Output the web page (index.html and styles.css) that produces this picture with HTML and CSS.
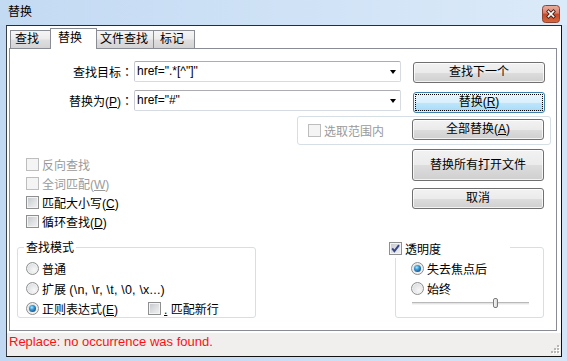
FILE: index.html
```html
<!DOCTYPE html>
<html>
<head>
<meta charset="utf-8">
<title>替换</title>
<link rel="stylesheet" href="styles.css">
</head>
<body>
<div class="window">
  <div class="titlebar">
    <span class="title">替换</span>
    <span class="close">
      <svg width="18" height="18" viewBox="0 0 18 18">
        <defs>
          <linearGradient id="cg" x1="0" y1="0" x2="0" y2="1">
            <stop offset="0" stop-color="#eab0a2"/>
            <stop offset="0.45" stop-color="#d9806b"/>
            <stop offset="0.5" stop-color="#c4462a"/>
            <stop offset="1" stop-color="#d96a3a"/>
          </linearGradient>
        </defs>
        <rect x="0.5" y="0.5" width="17" height="17" rx="3" fill="url(#cg)" stroke="#8a4536"/>
        <path d="M6.5 6.5 L11.5 11.5 M11.5 6.5 L6.5 11.5" stroke="#4a1e14" stroke-width="3.4" stroke-linecap="square"/>
        <path d="M6.5 6.5 L11.5 11.5 M11.5 6.5 L6.5 11.5" stroke="#ffffff" stroke-width="1.7" stroke-linecap="square"/>
      </svg>
    </span>
  </div>
  <div class="client">
    <div class="main">
      <div class="tabs">
        <div class="tab t1">查找</div>
        <div class="tab active">替换</div>
        <div class="tab t3">文件查找</div>
        <div class="tab t4">标记</div>
      </div>
      <div class="panel">
        <div class="row r1">
          <div class="lbl">查找目标<span class="colon">：</span></div>
          <div class="combo"><span class="val">href=".*[^"]"</span><span class="arrow"></span></div>
          <div class="btn">查找下一个</div>
        </div>
        <div class="row r2">
          <div class="lbl">替换为(<u>P</u>)<span class="colon">：</span></div>
          <div class="combo"><span class="val">href="#"</span><span class="arrow"></span></div>
          <div class="btn focus">替换(<u>R</u>)</div>
        </div>
        <div class="selgroup">
          <div class="chk sel disabled"><span class="box"></span><span>选取范围内</span></div>
          <div class="btn">全部替换(<u>A</u>)</div>
        </div>
        <div class="lower">
          <div class="checks">
            <div class="chk disabled"><span class="box"></span><span>反向查找</span></div>
            <div class="chk disabled"><span class="box"></span><span>全词匹配(<u>W</u>)</span></div>
            <div class="chk"><span class="box"></span><span>匹配大小写(<u>C</u>)</span></div>
            <div class="chk"><span class="box"></span><span>循环查找(<u>D</u>)</span></div>
          </div>
          <div class="btncol">
            <div class="btn tall">替换所有打开文件</div>
            <div class="btn">取消</div>
          </div>
        </div>
        <div class="bottom">
          <div class="group mode">
            <div class="legend">查找模式</div>
            <div class="opt"><span class="radio"></span><span>普通</span></div>
            <div class="opt"><span class="radio"></span><span>扩展 <span class="esc">(\n, \r, \t, \0, \x...)</span></span></div>
            <div class="opt">
              <div class="optitem"><span class="radio on"><span class="dot"></span></span><span>正则表达式(<u>E</u>)</span></div>
              <div class="chk"><span class="box"></span><span><u>.</u> 匹配新行</span></div>
            </div>
          </div>
          <div class="group trans">
            <div class="chk head"><span class="box">
              <svg width="11" height="11" viewBox="0 0 11 11"><path d="M2.2 5.4 L4.4 8.2 L9 2.2" fill="none" stroke="#34468a" stroke-width="1.9"/></svg>
            </span><span>透明度</span></div>
            <div class="opt"><span class="radio on"><span class="dot"></span></span><span>失去焦点后</span></div>
            <div class="opt"><span class="radio"></span><span>始终</span></div>
            <div class="slider"><span class="track a"></span><span class="thumb"></span><span class="track b"></span></div>
          </div>
        </div>
      </div>
    </div>
    <div class="status">
      <span class="msg">Replace: no occurrence was found.</span>
      <svg class="grip" width="10" height="10" viewBox="0 0 10 10">
        <g fill="#ffffff">
          <rect x="8" y="2" width="2" height="2"/><rect x="5" y="5" width="2" height="2"/><rect x="8" y="5" width="2" height="2"/>
          <rect x="2" y="8" width="2" height="2"/><rect x="5" y="8" width="2" height="2"/><rect x="8" y="8" width="2" height="2"/>
        </g>
        <g fill="#b8b6b2">
          <rect x="7" y="1" width="2" height="2"/><rect x="4" y="4" width="2" height="2"/><rect x="7" y="4" width="2" height="2"/>
          <rect x="1" y="7" width="2" height="2"/><rect x="4" y="7" width="2" height="2"/><rect x="7" y="7" width="2" height="2"/>
        </g>
      </svg>
    </div>
  </div>
</div>
</body>
</html>
```

FILE: styles.css
```css
* { box-sizing: border-box; }
html, body { margin: 0; padding: 0; }
body {
  width: 567px;
  height: 361px;
  overflow: hidden;
  font-family: "Liberation Sans", "Noto Sans CJK SC", sans-serif;
  font-size: 12px;
  color: #000;
}
u { text-decoration: underline; text-underline-offset: 1px; }

.window {
  width: 567px;
  height: 361px;
  display: flex;
  flex-direction: column;
  background: linear-gradient(90deg, #c0d8f1 0%, #c8ddf4 45%, #d4e5f7 100%);
}

.titlebar {
  height: 25px;
  display: flex;
  align-items: flex-start;
  padding-left: 8px;
  background: linear-gradient(90deg, #c3daf3 0%, #cfe2f6 50%, #dbeaf9 100%);
}
.title { line-height: 24px; font-size: 12px; }
.close { margin: 5px 7px 0 auto; width: 18px; height: 18px; display: flex; }

.client {
  margin: 0 5px 0 6px;
  height: 332px;
  border: 1px solid #111;
  border-left-color: #3a3f47;
  border-top-color: #2a2e34;
  display: flex;
  flex-direction: column;
}
.main { height: 307px; background: #fff; }

.tabs {
  height: 22px;
  display: flex;
  align-items: flex-end;
  padding-left: 3px;
}
.tab {
  height: 18px;
  border: 1px solid #898c95;
  border-bottom: none;
  background: linear-gradient(#f5f5f5 0%, #ececec 45%, #dedede 55%, #d3d3d3 100%);
  line-height: 16px;
  padding-left: 4px;
  margin-left: -1px;
  white-space: nowrap;
}
.tab.t1 { width: 41px; margin-left: 0; padding-left: 4px; }
.tab.active {
  width: 47px;
  height: 21px;
  margin-bottom: -1px;
  background: #fff;
  line-height: 18px;
  padding-left: 7px;
  position: relative;
  z-index: 1;
}
.tab.t3 { width: 58px; padding-left: 3px; }
.tab.t4 { width: 42px; padding-left: 6px; }

.panel {
  margin-left: 2px;
  width: 548px;
  height: 283px;
  border: 1px solid #898c95;
  background: #fff;
}

.row { display: flex; height: 21px; }
.r1 { margin-top: 12px; }
.r2 { margin-top: 8px; }
.lbl { width: 123px; text-align: right; line-height: 21px; white-space: nowrap; }
.colon { font-family: "Noto Sans CJK JP", sans-serif; }
.combo {
  margin-left: 1px;
  width: 267px;
  height: 21px;
  border: 1px solid #d6dbe2;
  border-top-color: #abadb3;
  border-left-color: #c8ccd2;
  border-radius: 2px;
  display: flex;
  align-items: center;
  padding-left: 2px;
}
.combo .val { flex: 1; line-height: 19px; white-space: nowrap; }
.arrow {
  width: 0;
  height: 0;
  border-left: 3.5px solid transparent;
  border-right: 3.5px solid transparent;
  border-top: 4px solid #000;
  margin-right: 4px;
}

.btn {
  width: 132px;
  height: 21px;
  margin-left: 12px;
  border: 1px solid #707070;
  border-radius: 3px;
  background: linear-gradient(#f2f2f2 0%, #ebebeb 50%, #dddddd 51%, #cfcfcf 100%);
  box-shadow: inset 0 0 0 1px rgba(255,255,255,0.75);
  text-align: center;
  line-height: 19px;
  white-space: nowrap;
  flex: none;
}
.r1 .btn { margin-top: 1px; }
.r2 .btn { margin-top: 2px; }
.btn.focus {
  border-color: #3c7fb1;
  background: linear-gradient(#eaf6fd 0%, #d9f0fc 50%, #bee6fd 51%, #a7d9f5 100%);
  box-shadow: inset 0 0 0 1px rgba(255,255,255,0.6);
  outline: 1px dotted #000;
  outline-offset: -3px;
}

.selgroup {
  margin: 5px 0 0 287px;
  width: 254px;
  height: 29px;
  border: 1px solid #d5dfe5;
  border-radius: 3px;
  display: flex;
  align-items: flex-start;
}
.chk { display: flex; align-items: center; gap: 3px; white-space: nowrap; }
.chk.sel { width: 114px; padding-left: 10px; height: 21px; margin-top: 3px; }
.selgroup .btn { margin: 2px 0 0 0; }

.box {
  width: 13px;
  height: 13px;
  flex: none;
  border: 1px solid #8e8f8f;
  background: linear-gradient(135deg, #c3c6ca 0%, #e2e3e5 60%, #f2f2f2 100%);
  box-shadow: inset 0 0 0 1px #f4f4f4;
  display: flex;
  align-items: center;
  justify-content: center;
}
.disabled { color: #9a9a9a; }
.disabled .box { border-color: #bdbdbd; background: #f4f4f4; box-shadow: none; }

.lower { display: flex; height: 86px; }
.checks { margin-left: 16px; width: 386px; padding-top: 10px; }
.checks .chk { height: 19px; }
.btncol { display: flex; flex-direction: column; padding-top: 4px; }
.btncol .btn { margin-left: 0; }
.btn.tall { height: 32px; line-height: 30px; }
.btncol .btn + .btn { margin-top: 7px; }

.bottom { display: flex; align-items: flex-start; margin-top: 16px; }
.group {
  height: 71px;
  border: 1px solid #d5dfe5;
  border-radius: 3px;
}
.mode { margin-left: 7px; width: 239px; }
.legend {
  width: fit-content;
  margin: -8px 0 0 6px;
  padding: 0 2px;
  background: #fff;
  line-height: 16px;
}
.opt { display: flex; align-items: center; gap: 3px; height: 20px; white-space: nowrap; }
.mode .opt { padding-left: 8px; }
.mode .legend + .opt { margin-top: 2px; }
.optitem { display: flex; align-items: center; gap: 3px; width: 119px; }
.esc { font-size: 12.5px; letter-spacing: 0.2px; }

.radio {
  width: 13px;
  height: 13px;
  flex: none;
  border-radius: 50%;
  border: 1px solid #8e8f8f;
  background: radial-gradient(circle at 65% 65%, #f8f8f8 0%, #e3e4e6 55%, #c9cbce 100%);
  box-shadow: inset 0 0 0 1px #f1f1f1;
  display: flex;
  align-items: center;
  justify-content: center;
}
.radio .dot {
  width: 7px;
  height: 7px;
  border-radius: 50%;
  background: radial-gradient(circle at 40% 35%, #a8ecff 0%, #3b9ad6 35%, #18558f 75%, #0f3a66 100%);
}

.trans { margin-left: 139px; width: 149px; }
.chk.head {
  margin: -10px 0 0 -7px;
  width: 121px;
  height: 20px;
  background: #fff;
}
.trans .opt { padding-left: 15px; }
.slider {
  margin-left: 16px;
  width: 117px;
  height: 10px;
  display: flex;
  align-items: center;
}
.track {
  height: 3px;
  border-top: 1px solid #b9b9b9;
  border-bottom: 1px solid #f4f4f4;
  background: #e3e4e6;
}
.track.a { width: 81px; }
.track.b { flex: 1; }
.thumb {
  width: 5px;
  height: 10px;
  border: 1px solid #7b7b7b;
  border-radius: 2px;
  background: linear-gradient(90deg, #f6f6f6, #dadada);
}

.status {
  height: 23px;
  background: #f0efed;
  display: flex;
  align-items: flex-start;
  padding-left: 2px;
}
.msg { color: #ff1010; font-size: 13px; line-height: 18px; white-space: nowrap; }
.grip { margin: auto 1px 2px auto; flex: none; }
```
